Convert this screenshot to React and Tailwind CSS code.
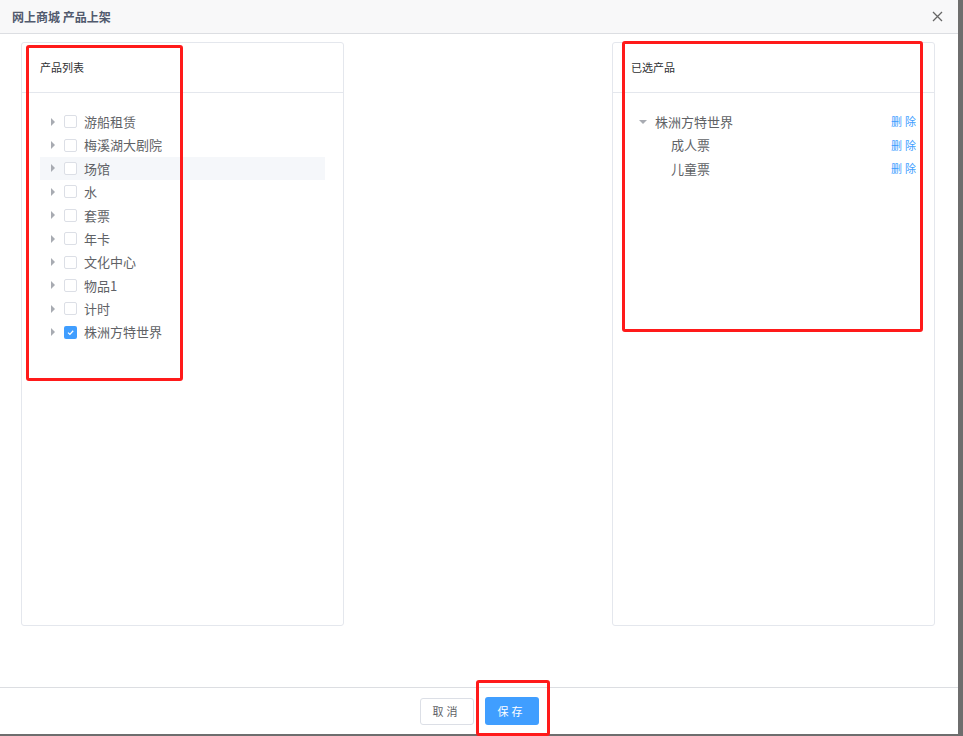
import React from 'react';

const products = ['游船租赁', '梅溪湖大剧院', '场馆', '水', '套票', '年卡', '文化中心', '物品1', '计时', '株洲方特世界'];

const Caret = ({ down }) => (
    <svg width="8" height="8" viewBox="0 0 8 8" className="shrink-0">
        {down ? <path d="M0 2 L8 2 L4 6 Z" fill="#a8abb2" /> : <path d="M2 0 L6 4 L2 8 Z" fill="#a8abb2" />}
    </svg>
);

const Checkbox = ({ checked }) =>
    checked ? (
        <span className="ml-[7px] w-[13px] h-[13px] rounded-[2px] bg-[#409eff] flex items-center justify-center shrink-0">
            <svg width="9" height="9" viewBox="0 0 9 9">
                <path d="M2 4.6 L3.9 6.4 L7.2 2.8" stroke="#fff" strokeWidth="1.3" fill="none" />
            </svg>
        </span>
    ) : (
        <span className="ml-[7px] block w-[13px] h-[13px] rounded-[2px] border border-[#dcdfe6] bg-white shrink-0" />
    );

const Panel = ({ title, children }) => (
    <div className="w-[323px] h-[584px] border border-[#e4e7ed] rounded-[3px] flex flex-col">
        <div className="h-[50px] border-b border-[#e4e7ed] flex items-center pl-[18px] text-[11px] text-[#303133]">{title}</div>
        <div className="pt-[17px]">{children}</div>
    </div>
);

export default function App() {
    return (
        <div className="w-[963px] h-[736px] bg-[#6e6e6e] relative" style={{ fontFamily: '"Noto Sans CJK SC", "Noto Sans", sans-serif' }}>
            <div className="w-[958px] h-[734px] bg-white flex flex-col">
                <div className="h-[34px] bg-[#f8f8f9] border-b border-[#dcdee2] flex items-center justify-between pl-[12px] pr-[15px]">
                    <span className="text-[12px] font-bold text-[#515a6e]">网上商城 产品上架</span>
                    <svg width="11" height="11" viewBox="0 0 11 11">
                        <path d="M1 1 L10 10 M10 1 L1 10" stroke="#666" strokeWidth="1.3" />
                    </svg>
                </div>
                <div className="flex-1 flex justify-between pl-[21px] pr-[23px] pt-[8px]">
                    <Panel title="产品列表">
                        <div className="px-[18px]">
                            {products.map((p, i) => (
                                <div key={p} className={`h-[23.4px] flex items-center pl-[9px] ${i === 2 ? 'bg-[#f5f7fa]' : ''}`}>
                                    <Caret />
                                    <Checkbox checked={i === 9} />
                                    <span className="ml-[7px] text-[13px] text-[#606266]">{p}</span>
                                </div>
                            ))}
                        </div>
                    </Panel>
                    <Panel title="已选产品">
                        <div className="pl-[26px] pr-[18px]">
                            <div className="h-[23.4px] flex items-center">
                                <Caret down />
                                <span className="ml-[8px] text-[13px] text-[#606266] flex-1">株洲方特世界</span>
                                <span className="text-[11px] text-[#409eff] tracking-[3px] mr-[-3px]">删除</span>
                            </div>
                            {['成人票', '儿童票'].map((c) => (
                                <div key={c} className="h-[23.4px] flex items-center pl-[32px]">
                                    <span className="text-[13px] text-[#606266] flex-1">{c}</span>
                                    <span className="text-[11px] text-[#409eff] tracking-[3px] mr-[-3px]">删除</span>
                                </div>
                            ))}
                        </div>
                    </Panel>
                </div>
                <div className="h-[47px] border-t border-[#dcdee2] flex items-center justify-center gap-[11px]">
                    <button className="w-[54px] h-[27px] border border-[#dcdfe6] rounded-[3px] text-[11px] text-[#606266] tracking-[3px] bg-white">取消</button>
                    <button className="w-[54px] h-[28px] rounded-[3px] text-[11px] text-white tracking-[3px] bg-[#409eff]">保存</button>
                </div>
            </div>
            <div className="absolute left-[26px] top-[45px] w-[157px] h-[336px] border-[3px] border-[#ff1a1a] rounded-[3px] pointer-events-none" />
            <div className="absolute left-[622px] top-[41px] w-[301px] h-[291px] border-[3px] border-[#ff1a1a] rounded-[3px] pointer-events-none" />
            <div className="absolute left-[476px] top-[680px] w-[74px] h-[56px] border-[3px] border-[#ff1a1a] rounded-[3px] pointer-events-none" />
        </div>
    );
}
